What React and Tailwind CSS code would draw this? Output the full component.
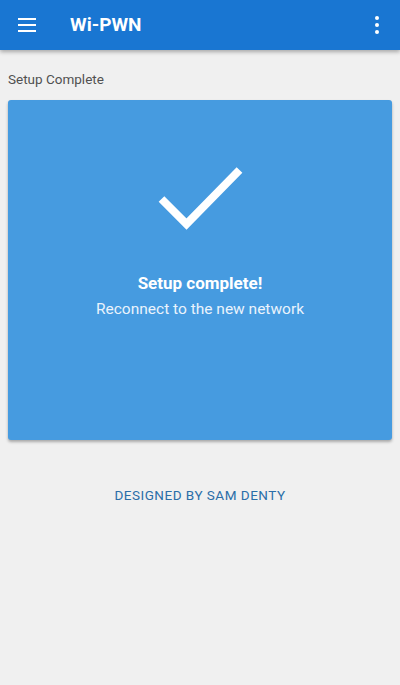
const App = () => {
  return (
    <div className="min-h-[685px] bg-[#f0f0f0] font-['Roboto',sans-serif]">
      {/* Toolbar */}
      <div className="h-[50px] bg-[#1976d2] shadow-[0_2px_4px_rgba(0,0,0,0.3)] flex items-center relative">
        <div className="w-[18px] ml-[18px] flex flex-col gap-[4px]">
          <span className="h-[2px] bg-white block"></span>
          <span className="h-[2px] bg-white block"></span>
          <span className="h-[2px] bg-white block"></span>
        </div>
        <h1 className="ml-[34px] text-white text-[19px] font-bold">Wi-PWN</h1>
        <div className="ml-auto mr-[21px] flex flex-col gap-[3px] items-center">
          <span className="w-[4px] h-[4px] rounded-full bg-white block"></span>
          <span className="w-[4px] h-[4px] rounded-full bg-white block"></span>
          <span className="w-[4px] h-[4px] rounded-full bg-white block"></span>
        </div>
      </div>

      <div className="px-2">
        <p className="mt-[20px] text-[13.5px] leading-[18px] text-[#505050]">Setup Complete</p>

        {/* Result card */}
        <div className="mt-[12px] h-[340px] bg-[#469be0] rounded-[3px] shadow-[0_2px_3px_rgba(0,0,0,0.3)] flex flex-col items-center pt-[62px]">
          <svg width="96" height="72" viewBox="0 0 96 72">
            <polyline
              points="9.5,37 34.5,62 87.5,8"
              fill="none"
              stroke="white"
              strokeWidth="8"
              strokeLinecap="butt"
              strokeLinejoin="miter"
            />
          </svg>
          <p className="mt-[38px] text-white text-[17px] leading-[22px] font-bold">Setup complete!</p>
          <p className="mt-[5px] text-[#eaf3fc] text-[15.5px] leading-[20px]">Reconnect to the new network</p>
        </div>

        <p className="mt-[46px] text-center text-[13.5px] leading-[18px] tracking-[0.5px] text-[#2a6ea8]">DESIGNED BY SAM DENTY</p>
      </div>
    </div>
  );
};

export default App;
